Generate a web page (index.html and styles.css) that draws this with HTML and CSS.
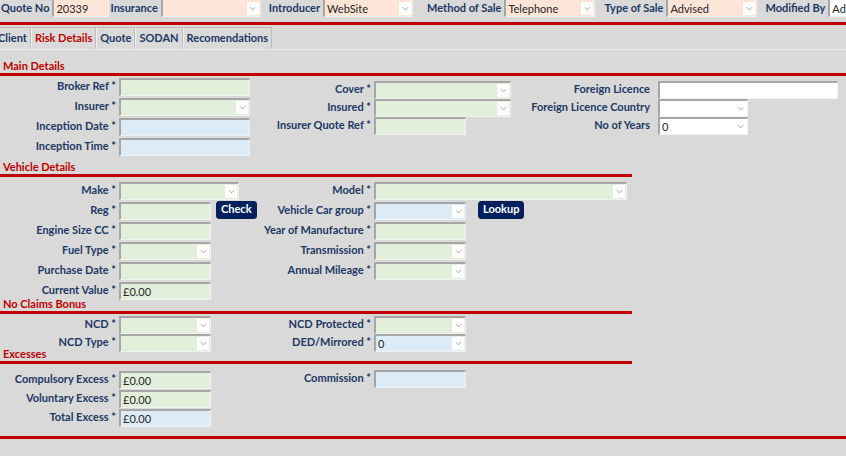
FILE: index.html
```html
<!DOCTYPE html>
<html lang="en">
<head>
    <meta charset="UTF-8">
    <title>Risk Details</title>
    <link rel="stylesheet" href="styles.css">
</head>
<body>
    <!-- Quote header -->
    <div class="topbar">
        <span class="tlabel">Quote No</span>
        <div class="field peach w57">20339</div>
        <span class="tlabel">Insurance</span>
        <div class="field peach select w100"><span class="val"></span><span class="arrow"><svg viewBox="0 0 8 5"><polyline points="1,1 4,4 7,1"/></svg></span></div>
        <span class="tlabel gap7">Introducer</span>
        <div class="field peach select w90"><span class="val">WebSite</span><span class="arrow"><svg viewBox="0 0 8 5"><polyline points="1,1 4,4 7,1"/></svg></span></div>
        <span class="tlabel gap13">Method of Sale</span>
        <div class="field peach select w91"><span class="val">Telephone</span><span class="arrow"><svg viewBox="0 0 8 5"><polyline points="1,1 4,4 7,1"/></svg></span></div>
        <span class="tlabel gap8">Type of Sale</span>
        <div class="field peach select w91"><span class="val">Advised</span><span class="arrow"><svg viewBox="0 0 8 5"><polyline points="1,1 4,4 7,1"/></svg></span></div>
        <span class="tlabel gap7">Modified By</span>
        <div class="field white w60">Admin</div>
    </div>
    <div class="rule"></div>

    <!-- Tabs -->
    <div class="tabs">
        <div class="tab">Client</div>
        <div class="tab active">Risk Details</div>
        <div class="tab">Quote</div>
        <div class="tab">SODAN</div>
        <div class="tab">Recomendations</div>
    </div>

    <!-- Main Details -->
    <div class="block-title">Main Details</div>
    <div class="block-body main">
        <div class="col c1">
            <label>Broker Ref *</label><div class="field green w131"></div>
            <label>Insurer *</label><div class="field green select w131"><span class="val"></span><span class="arrow"><svg viewBox="0 0 8 5"><polyline points="1,1 4,4 7,1"/></svg></span></div>
            <label>Inception Date *</label><div class="field blue w131"></div>
            <label>Inception Time *</label><div class="field blue w131"></div>
        </div>
        <div class="col c2 tight">
            <label>Cover *</label><div class="field green select w137"><span class="val"></span><span class="arrow"><svg viewBox="0 0 8 5"><polyline points="1,1 4,4 7,1"/></svg></span></div>
            <label>Insured *</label><div class="field green select w137"><span class="val"></span><span class="arrow"><svg viewBox="0 0 8 5"><polyline points="1,1 4,4 7,1"/></svg></span></div>
            <label>Insurer Quote Ref *</label><div class="field green w92"></div>
        </div>
        <div class="col c3 tight">
            <label>Foreign Licence</label><div class="field white w180"></div>
            <label>Foreign Licence Country</label><div class="field white select w90"><span class="val"></span><span class="arrow"><svg viewBox="0 0 8 5"><polyline points="1,1 4,4 7,1"/></svg></span></div>
            <label>No of Years</label><div class="field white select w90"><span class="val">0</span><span class="arrow"><svg viewBox="0 0 8 5"><polyline points="1,1 4,4 7,1"/></svg></span></div>
        </div>
    </div>

    <!-- Vehicle Details -->
    <div class="block-title short">Vehicle Details</div>
    <div class="block-body vehicle">
        <div class="col c1">
            <label>Make *</label><div class="field green select w120"><span class="val"></span><span class="arrow"><svg viewBox="0 0 8 5"><polyline points="1,1 4,4 7,1"/></svg></span></div>
            <label>Reg *</label>
            <div class="with-btn"><div class="field green w92"></div><button class="btn">Check</button></div>
            <label>Engine Size CC *</label><div class="field green w92"></div>
            <label>Fuel Type *</label><div class="field green select w92"><span class="val"></span><span class="arrow"><svg viewBox="0 0 8 5"><polyline points="1,1 4,4 7,1"/></svg></span></div>
            <label>Purchase Date *</label><div class="field green w92"></div>
            <label>Current Value *</label><div class="field green w92">£0.00</div>
        </div>
        <div class="col c2">
            <label>Model *</label><div class="field green select w253"><span class="val"></span><span class="arrow"><svg viewBox="0 0 8 5"><polyline points="1,1 4,4 7,1"/></svg></span></div>
            <label>Vehicle Car group *</label>
            <div class="with-btn wide"><div class="field blue select w92"><span class="val"></span><span class="arrow"><svg viewBox="0 0 8 5"><polyline points="1,1 4,4 7,1"/></svg></span></div><button class="btn">Lookup</button></div>
            <label>Year of Manufacture *</label><div class="field green w92"></div>
            <label>Transmission *</label><div class="field green select w92"><span class="val"></span><span class="arrow"><svg viewBox="0 0 8 5"><polyline points="1,1 4,4 7,1"/></svg></span></div>
            <label>Annual Mileage *</label><div class="field green select w92"><span class="val"></span><span class="arrow"><svg viewBox="0 0 8 5"><polyline points="1,1 4,4 7,1"/></svg></span></div>
        </div>
    </div>

    <!-- No Claims Bonus -->
    <div class="block-title short">No Claims Bonus</div>
    <div class="block-body ncb">
        <div class="col c1 tight">
            <label>NCD *</label><div class="field green select w92"><span class="val"></span><span class="arrow"><svg viewBox="0 0 8 5"><polyline points="1,1 4,4 7,1"/></svg></span></div>
            <label>NCD Type *</label><div class="field green select w92"><span class="val"></span><span class="arrow"><svg viewBox="0 0 8 5"><polyline points="1,1 4,4 7,1"/></svg></span></div>
        </div>
        <div class="col c2 tight">
            <label>NCD Protected *</label><div class="field green select w92"><span class="val"></span><span class="arrow"><svg viewBox="0 0 8 5"><polyline points="1,1 4,4 7,1"/></svg></span></div>
            <label>DED/Mirrored *</label><div class="field blue select w92"><span class="val">0</span><span class="arrow"><svg viewBox="0 0 8 5"><polyline points="1,1 4,4 7,1"/></svg></span></div>
        </div>
    </div>

    <!-- Excesses -->
    <div class="block-title short">Excesses</div>
    <div class="block-body excess">
        <div class="col c1 mid">
            <label>Compulsory Excess *</label><div class="field green w92">£0.00</div>
            <label>Voluntary Excess *</label><div class="field green w92">£0.00</div>
            <label>Total Excess *</label><div class="field blue w92">£0.00</div>
        </div>
        <div class="col c2">
            <label>Commission *</label><div class="field blue w92"></div>
        </div>
    </div>
    <div class="rule"></div>
</body>
</html>
```

FILE: styles.css
```css
body {
    font-family: Lato, "Open Sans", sans-serif;
    font-size: 11px;
    background-color: #d9d9d9;
    color: #203864;
    margin: 0;
    padding: 0;
    overflow: hidden;
}

/* Header row */
.topbar {
    display: flex;
    align-items: flex-start;
    height: 18px;
    white-space: nowrap;
}

.topbar > * {
    flex-shrink: 0;
}

.tlabel {
    font-weight: bold;
    line-height: 15px;
    padding: 0 3px 0 1px;
}

.gap7 { margin-left: 7px; }
.gap8 { margin-left: 8px; }
.gap13 { margin-left: 13px; }

.topbar .field {
    height: 17px;
    border-top: none;
}

.rule {
    height: 3px;
    margin-top: 4px;
    background-color: #c00000;
}

/* Tabs */
.tabs {
    display: flex;
    height: 22px;
    margin-top: 2px;
    margin-left: -6px;
    border-bottom: 1px solid #ececec;
}

.tab {
    font-weight: bold;
    line-height: 20px;
    padding: 0 3px;
    border: 1px solid #bdbdbd;
    border-bottom: none;
    border-left-color: #eeeeee;
    background-color: #dadada;
}

.tab.active {
    color: #c00000;
}

/* Section headings */
.block-title {
    color: #c00000;
    font-weight: bold;
    line-height: 14px;
    padding-left: 3px;
    border-bottom: 3px solid #c00000;
}

.block-title.short {
    width: 629px;
}

.tabs + .block-title {
    margin-top: 9px;
}

.block-body {
    display: flex;
    align-items: flex-start;
    box-sizing: border-box;
}

.block-body.main { height: 84px; padding-top: 1px; }
.block-body.vehicle { height: 120px; padding-top: 4px; }
.block-body.ncb { height: 33px; padding-top: 2px; }
.block-body.excess { height: 72px; padding-top: 6px; }

.block-body + .rule {
    margin-top: 0;
}

/* Label / control columns */
.col {
    display: grid;
    grid-template-columns: 116px auto;
    grid-auto-rows: 20px;
    column-gap: 3px;
    align-items: center;
}

.col label {
    font-weight: bold;
    text-align: right;
    white-space: nowrap;
    padding-bottom: 3px;
}

.col.tight { grid-auto-rows: 18px; }
.col.mid { grid-auto-rows: 19px; }

.c1 { width: 255px; }
.c2 { width: 265px; }
.c3 { grid-template-columns: 130px auto; column-gap: 8px; }

.main .c2,
.main .c3 {
    padding-top: 4px;
}

.excess .c2 {
    margin-top: -1px;
}

.with-btn {
    display: flex;
    align-items: center;
    gap: 5px;
}

.with-btn.wide {
    gap: 12px;
}

.btn {
    font-family: inherit;
    font-size: 11px;
    font-weight: bold;
    color: white;
    background-color: #002060;
    border: 1px solid #0b1f4d;
    border-radius: 3px;
    height: 18px;
    padding: 0 4px 2px;
    line-height: 14px;
    margin-top: -2px;
}

/* Sunken text boxes and combo boxes */
.field {
    box-sizing: border-box;
    height: 18px;
    display: flex;
    align-items: center;
    padding: 0 2px;
    font-weight: normal;
    color: #262626;
    border-top: 2px solid #a6a6a6;
    border-left: 2px solid #a6a6a6;
    border-right: 1px solid #f2f2f2;
    border-bottom: 1px solid #f2f2f2;
    overflow: hidden;
    white-space: nowrap;
}

.green { background-color: #e2efda; }
.blue { background-color: #ddebf7; }
.peach { background-color: #fce4d6; }
.white { background-color: #ffffff; }

.select .val {
    flex: 1;
}

.arrow {
    width: 12px;
    height: 13px;
    background-color: #ffffff;
    display: flex;
    align-items: center;
    justify-content: center;
    margin-right: -1px;
}

.arrow svg {
    width: 7px;
    height: 5px;
    fill: none;
    stroke: #8c8c8c;
    stroke-width: 0.9;
}

.w57 { width: 57px; }
.w60 { width: 60px; }
.w90 { width: 90px; }
.w91 { width: 91px; }
.w92 { width: 92px; }
.w100 { width: 100px; }
.w120 { width: 120px; }
.w131 { width: 131px; }
.w137 { width: 137px; }
.w180 { width: 180px; }
.w253 { width: 253px; }
```
